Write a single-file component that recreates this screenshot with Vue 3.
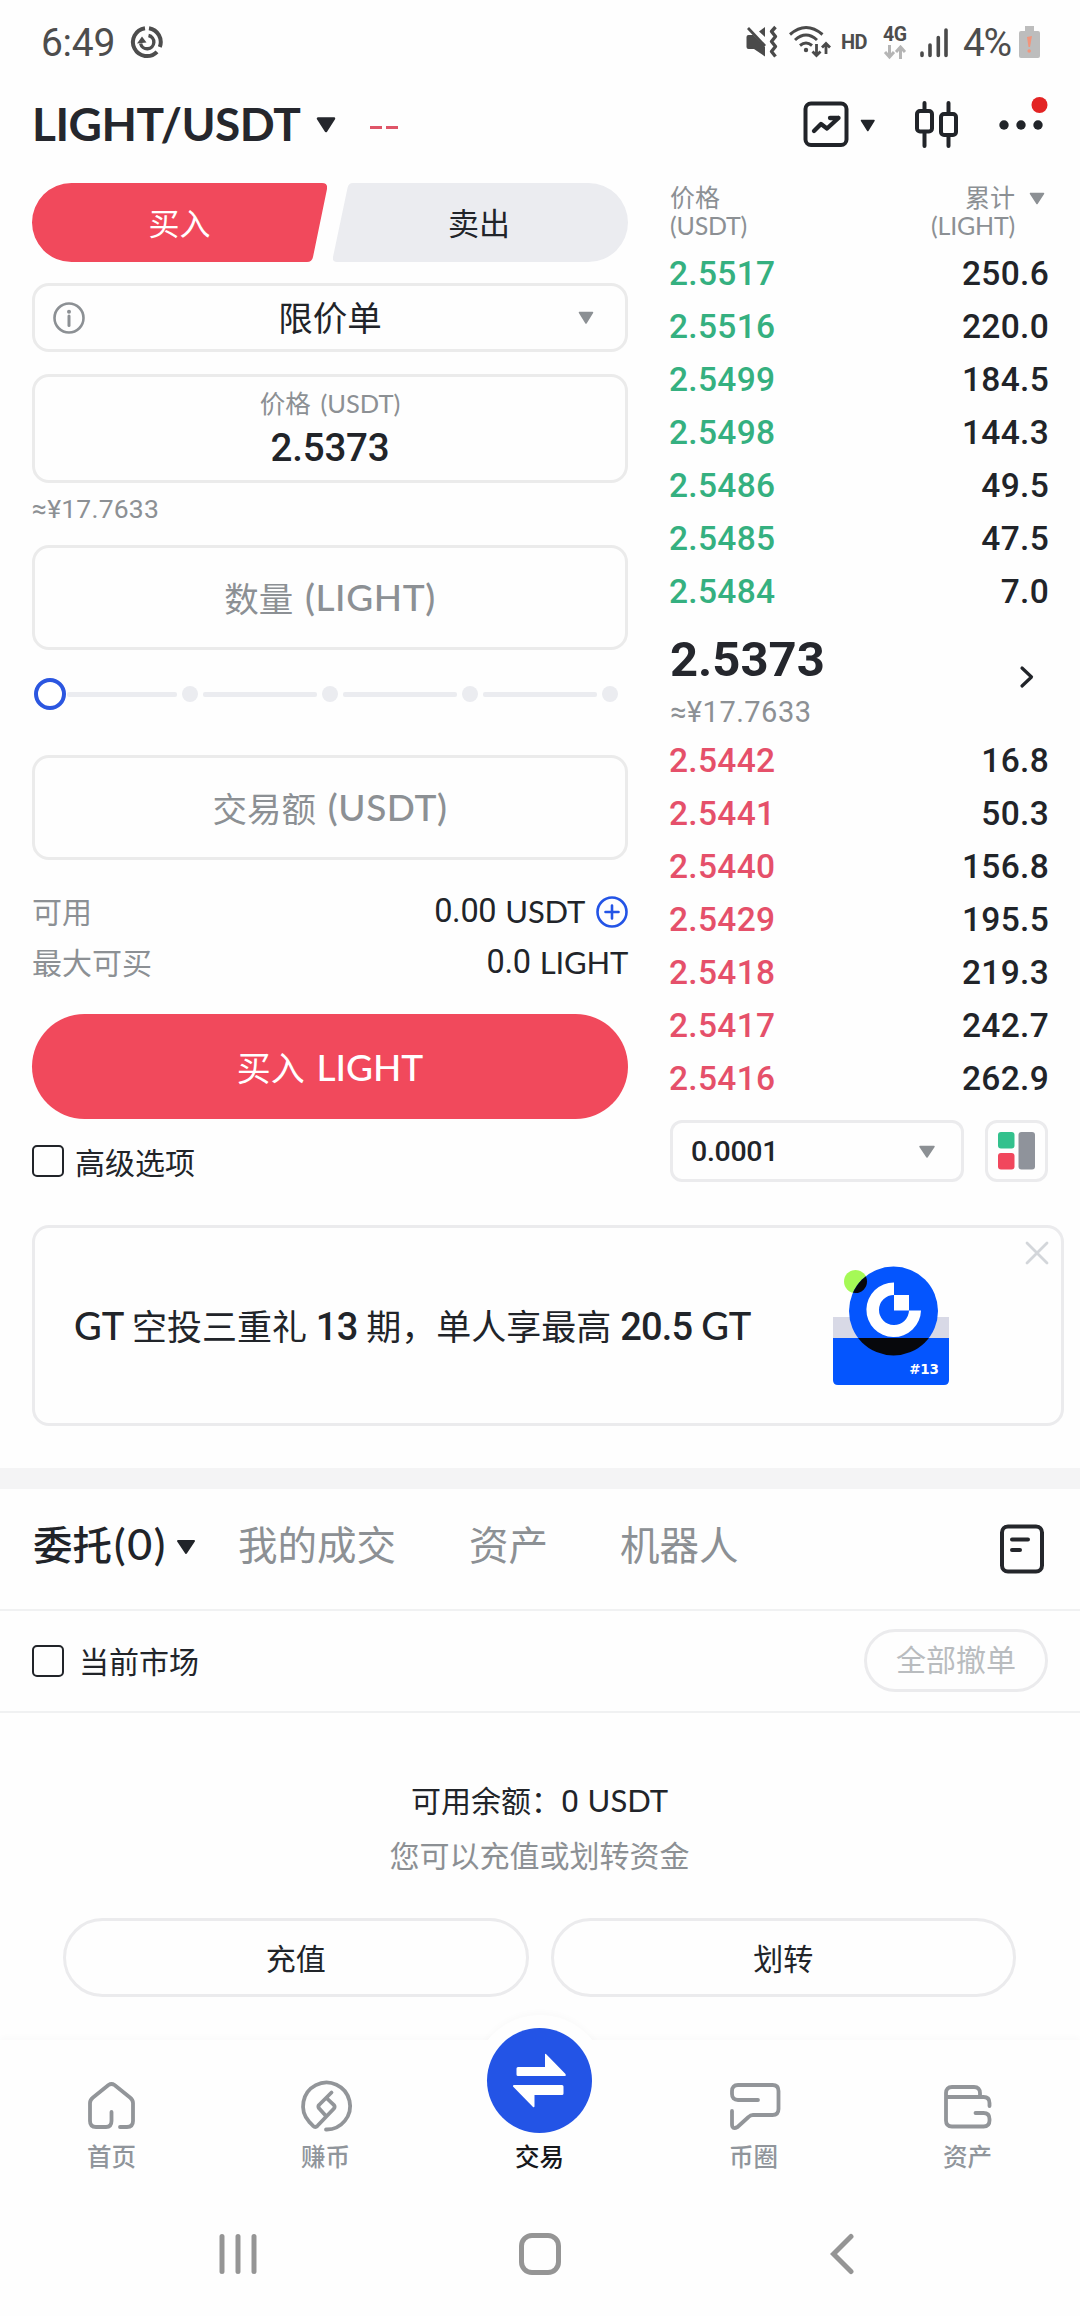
<script setup>
const bids = [
  ['2.5517', '250.6'],
  ['2.5516', '220.0'],
  ['2.5499', '184.5'],
  ['2.5498', '144.3'],
  ['2.5486', '49.5'],
  ['2.5485', '47.5'],
  ['2.5484', '7.0'],
]
const asks = [
  ['2.5442', '16.8'],
  ['2.5441', '50.3'],
  ['2.5440', '156.8'],
  ['2.5429', '195.5'],
  ['2.5418', '219.3'],
  ['2.5417', '242.7'],
  ['2.5416', '262.9'],
]
const home = 'M33 46h7q6 0 6-6V22q0-3-3-5.5L27.5 4q-3-2-6 0L6 16.5Q3 19 3 22V40q0 6 6 6h10q5.5 0 5.5-6V31'
const earn = 'M25 48.5A23.5 23.5 0 1 0 8 40.6L12 44.8Q14.3 47 16.5 44.8L33 27.5Q34.2 25.8 33 24.2L26 17.5M30.5 11.5L18 24Q16.8 25.6 18 27.3L24.5 34.5'
const chat = 'M29 19H9q-6 0-6-6V10q0-6 6-6H43.5q6 0 6 6V28q0 6-6 6H24q-2.5 0-4.5 2L8.5 46Q3 49 3 43V30'
const wallet = 'M46.5 25V22q0-6-6-6H3M37 16V12q0-6-6-6H9q-6 0-6 6V39.5q0 6 6 6H40.5q6 0 6-6V38q0-6-6-6H32.5'
const tabs = [
  { label: '首页', icon: home },
  { label: '赚币', icon: earn },
  { label: '交易', active: true },
  { label: '币圈', icon: chat },
  { label: '资产', icon: wallet },
]
</script>

<template>
  <div class="screen">
    <div class="status">
      <span class="clock">6:49</span>
      <svg class="sync" width="34" height="34" viewBox="0 0 34 34" fill="none" stroke="#4d4d4d">
        <path d="M19 3.2A14 14 0 0 1 29.8 22M27 26.8A14 14 0 1 1 15 3.2" stroke-width="4" />
        <path d="M18.5 10.5A6.7 6.7 0 1 1 10.6 18.5" stroke-width="3.4" />
        <path d="M7 18.5L12 11.5L16.5 17.5Z" fill="#4d4d4d" stroke="none" />
      </svg>
      <span class="grow"></span>
      <svg class="mute" width="34" height="34" viewBox="0 0 34 34" fill="none" stroke="#4a4a4a">
        <path d="M1.5 12q0-2 2-2H8L20 22V31.5L9 24H3.5q-2 0-2-2Z" fill="#4a4a4a" stroke="none" />
        <path d="M14 6.5L20 2V12Z" fill="#4a4a4a" stroke="none" />
        <path d="M3 3L20 21" stroke-width="2.8" />
        <path d="M30.5 2L26.5 6.5L30.5 11.5L26.5 16.5L30.5 21.5L26.5 26.5L30.5 31.5" stroke-width="3.4" stroke-linejoin="round" />
      </svg>
      <svg class="wifi" width="44" height="34" viewBox="0 0 44 34" fill="none" stroke="#4a4a4a" stroke-width="3">
        <path d="M2 9.5Q18-4.5 34.5 9.5M7 15Q18 5 29 15M12 20.5Q18 15.5 24 20.5" />
        <circle cx="18" cy="25" r="2.2" fill="#4a4a4a" stroke="none" />
        <path d="M28.5 19V30M24.5 26.5L28.5 30.5L32.5 26.5M38 29V19M34 22.5L38 18.5L42 22.5" stroke-width="2.8" />
      </svg>
      <span class="hd">HD</span>
      <span class="net">
        <span class="g4">4G</span>
        <svg width="24" height="15" viewBox="0 0 24 15" fill="none" stroke="#b5b5b5" stroke-width="3">
          <path d="M6.5 0V11M2 7L6.5 12L11 7M17.5 14V3M13 7L17.5 2L22 7" />
        </svg>
      </span>
      <svg class="bars" width="28" height="30" viewBox="0 0 28 30" stroke="#4a4a4a" stroke-width="3.6" stroke-linecap="round">
        <path d="M2 25V27.5M10 17V27.5M18.3 9.5V27.5M26 2V27.5" />
      </svg>
      <span class="pct">4%</span>
      <svg class="battery" width="21" height="34" viewBox="0 0 21 34">
        <path d="M6 1H15V6H19q2 0 2 2V31q0 2-2 2H2q-2 0-2-2V8q0-2 2-2H6Z" fill="#bdbdbd" />
        <path d="M8 12L13 11L11 22H9.5Z" fill="#f2957c" />
        <circle cx="10.2" cy="26" r="1.8" fill="#f2957c" />
      </svg>
    </div>

    <header class="head">
      <span class="pair">LIGHT/USDT</span>
      <svg class="pair-arrow" width="20" height="16" viewBox="0 0 20 16"><path d="M2 1.5H18L10 14Z" fill="#25272d" stroke="#25272d" stroke-width="2.5" stroke-linejoin="round" /></svg>
      <span class="change"><i></i><i></i></span>
      <span class="grow"></span>
      <svg width="46" height="48" viewBox="0 0 46 48" fill="none" stroke="#212429" stroke-width="4" stroke-linecap="round" stroke-linejoin="round">
        <rect x="2.5" y="3.5" width="41" height="41.5" rx="5.5" />
        <path d="M11 31L18 24L24 28.5L35.5 18M27 18H35.5" stroke-width="4.3" />
      </svg>
      <svg class="chart-arrow" width="16" height="13" viewBox="0 0 16 13"><path d="M1.5 1.5H14L7.8 11.5Z" fill="#212429" stroke="#212429" stroke-width="1.5" stroke-linejoin="round" /></svg>
      <svg class="candles" width="46" height="48" viewBox="0 0 46 48" fill="none" stroke="#212429" stroke-width="4">
        <rect x="3" y="11" width="15" height="20.5" rx="3" />
        <rect x="27" y="14" width="15" height="21" rx="3" />
        <path d="M10.5 3V10M10.5 32V46M34.5 3V13M34.5 36V46" stroke-linecap="round" />
      </svg>
      <svg class="more" width="48" height="48" viewBox="0 0 48 48">
        <g fill="#212429"><circle cx="8" cy="25" r="4.7" /><circle cx="25" cy="25" r="4.7" /><circle cx="42" cy="25" r="4.7" /></g>
        <circle cx="43.5" cy="5" r="8" fill="#e32424" />
      </svg>
    </header>

    <main class="trade">
      <section class="form">
        <div class="sides">
          <div class="side buy">买入</div>
          <div class="side sell">卖出</div>
        </div>
        <div class="box type">
          <svg width="32" height="32" viewBox="0 0 32 32" fill="none" stroke="#8c9094">
            <circle cx="16" cy="16" r="14.5" stroke-width="2.6" />
            <path d="M16 14V23.5" stroke-width="3" stroke-linecap="round" /><circle cx="16" cy="9.7" r="2" fill="#8c9094" stroke="none" />
          </svg>
          <span>限价单</span>
          <svg class="type-arrow" width="16" height="14" viewBox="0 0 16 14"><path d="M1.5 1.5H14.5L8 12Z" fill="#8c9094" stroke="#8c9094" stroke-linejoin="round" stroke-width="1.5" /></svg>
        </div>
        <div class="box price">
          <div class="price-label">价格 <span class="lat">(USDT)</span></div>
          <div class="price-value num">2.5373</div>
        </div>
        <div class="approx num">≈¥17.7633</div>
        <div class="box field">数量&nbsp;<span class="lat">(LIGHT)</span></div>
        <div class="slider">
          <i class="thumb"></i>
          <template v-for="n in 4" :key="n"><i class="seg"></i><i class="stop"></i></template>
        </div>
        <div class="box field">交易额&nbsp;<span class="lat">(USDT)</span></div>
        <div class="balances">
          <div class="bal"><span>可用</span><b><span class="num">0.00</span> <span class="lat">USDT</span>
            <svg width="32" height="32" viewBox="0 0 32 32" fill="none" stroke="#2354e6" stroke-width="2.6" stroke-linecap="round"><circle cx="16" cy="16" r="14.5" /><path d="M16 9.5V22.5M9.5 16H22.5" /></svg></b></div>
          <div class="bal"><span>最大可买</span><b><span class="num">0.0</span> <span class="lat">LIGHT</span></b></div>
        </div>
        <div class="submit">买入&nbsp;<span class="lat">LIGHT</span></div>
        <div class="advanced"><i class="check"></i><span>高级选项</span></div>
      </section>

      <section class="book">
        <div class="book-head">
          <div>价格<br /><span class="lat">(USDT)</span></div>
          <div class="total">
            <div>累计<br /><span class="lat">(LIGHT)</span></div>
            <svg width="16" height="13" viewBox="0 0 16 13"><path d="M1.5 1.5H14.5L8 11.5Z" fill="#8c9094" stroke="#8c9094" stroke-linejoin="round" stroke-width="1.5" /></svg>
          </div>
        </div>
        <div v-for="row in bids" :key="row[0]" class="row up"><span>{{ row[0] }}</span><b>{{ row[1] }}</b></div>
        <div class="last">
          <div>
            <div class="last-price">2.5373</div>
            <div class="last-fiat num">≈¥17.7633</div>
          </div>
          <svg width="16" height="24" viewBox="0 0 16 24" fill="none" stroke="#212429" stroke-width="3.2" stroke-linecap="round" stroke-linejoin="round"><path d="M3 3L12.5 12L3 21" /></svg>
        </div>
        <div v-for="row in asks" :key="row[0]" class="row down"><span>{{ row[0] }}</span><b>{{ row[1] }}</b></div>
        <div class="depth">
          <div class="step"><span class="num">0.0001</span>
            <svg width="18" height="14" viewBox="0 0 18 14"><path d="M2 1.5H16L9 12Z" fill="#8c9094" stroke="#8c9094" stroke-linejoin="round" stroke-width="1.5" /></svg>
          </div>
          <div class="view">
            <svg width="38" height="38" viewBox="0 0 38 38"><rect width="16.5" height="16.5" rx="3" fill="#33c18d" /><rect y="21" width="16.5" height="16.5" rx="3" fill="#f1475d" /><rect x="20.5" width="16.5" height="37.5" rx="3" fill="#8f939b" /></svg>
          </div>
        </div>
      </section>
    </main>

    <section class="banner">
      <div class="promo"><span class="lat">GT</span> 空投三重礼 <span class="num">13</span> 期，单人享最高 <span class="num">20.5</span> <span class="lat">GT</span></div>
      <svg class="art" width="118" height="122" viewBox="0 0 118 122">
        <defs>
          <clipPath id="coin"><circle cx="61.5" cy="46" r="44.5" /></clipPath>
        </defs>
        <rect x="1" y="52" width="116" height="30" fill="#d8d9e6" />
        <path d="M1 73H117V115q0 5-5 5H6q-5 0-5-5Z" fill="#0455fe" />
        <circle cx="23.5" cy="16.5" r="11.5" fill="#a5f956" />
        <circle cx="61.5" cy="46" r="44.5" fill="#0455fe" />
        <g clip-path="url(#coin)">
          <rect y="73" width="118" height="30" fill="#07080c" />
          <circle cx="23.5" cy="16.5" r="11.5" fill="#07080c" />
        </g>
        <path d="M62 17.500V30A15 15 0 1 0 77 45.500H89A27.300 27.300 0 1 1 62 17.500Z" fill="#fff" />
        <rect x="62" y="30" width="15" height="15.5" fill="#fff" />
        <text x="106.5" y="109" text-anchor="end" class="issue">#13</text>
      </svg>
      <svg class="close" width="24" height="24" viewBox="0 0 24 24" stroke="#d3d6da" stroke-width="2.8" stroke-linecap="round"><path d="M2 2L22 22M22 2L2 22" /></svg>
    </section>

    <section class="orders">
      <div class="order-tabs">
        <span class="on">委托<span class="lat">(0)</span></span>
        <svg class="on-arrow" width="20" height="16" viewBox="0 0 20 16"><path d="M2 2H18L10 14Z" fill="#212429" stroke="#212429" stroke-width="2" stroke-linejoin="round" /></svg>
        <span class="t2">我的成交</span><span class="t3">资产</span><span class="t4">机器人</span>
        <span class="grow"></span>
        <svg class="history" width="44" height="50" viewBox="0 0 44 50" fill="none" stroke="#24262b" stroke-width="4" stroke-linecap="round"><rect x="2" y="2.5" width="40" height="45" rx="6" /><path d="M12 15.5H28M12 26H20" /></svg>
      </div>
      <div class="market"><i class="check"></i><span>当前市场</span><div class="cancel">全部撤单</div></div>
      <div class="empty">
        <div>可用余额：<span class="num">0</span> <span class="lat">USDT</span></div>
        <div class="hint">您可以充值或划转资金</div>
        <div class="actions"><div>充值</div><div>划转</div></div>
      </div>
    </section>

    <nav class="nav">
      <div class="bump"></div>
      <div v-for="t in tabs" :key="t.label" class="tab" :class="{ active: t.active }">
        <div v-if="t.active" class="swap">
          <svg width="105" height="105" viewBox="0 0 105 105" fill="#fff">
            <path d="M31 39H58V26.5Q58 25 59.5 26.5L78.5 46Q79.5 48 78 48H31Q29.5 48 29.5 46.5V40.5Q29.5 39 31 39Z" />
            <path d="M27 57H75q1.500 0 1.500 1.500v7q0 1.500-1.500 1.500H47.500V78q0 2-1.500 1L26 58.500q-.500-1.500 1-1.500Z" />
          </svg>
        </div>
        <svg v-else width="50" height="50" viewBox="0 0 50 50" overflow="visible" fill="none" stroke="#929599" stroke-width="3.8" stroke-linecap="round" stroke-linejoin="round"><path :d="t.icon" /></svg>
        <span>{{ t.label }}</span>
      </div>
    </nav>

    <div class="system">
      <div><svg width="40" height="42" viewBox="0 0 40 42" stroke="#959595" stroke-width="5" stroke-linecap="round"><path d="M4 3.5V38.5M20 3.5V38.5M36 3.5V38.5" /></svg></div>
      <div><svg width="42" height="42" viewBox="0 0 42 42" fill="none" stroke="#959595" stroke-width="5"><rect x="2.5" y="2.5" width="37" height="37" rx="10.5" /></svg></div>
      <div><svg width="24" height="42" viewBox="0 0 24 42" fill="none" stroke="#959595" stroke-width="5" stroke-linecap="round"><path d="M21 3.5L3.5 21L21 38.5" /></svg></div>
    </div>
  </div>
</template>

<style>
body {
  margin: 0;
  background: #fefefe;
}
</style>

<style scoped>
.screen {
  width: 1080px;
  height: 2316px;
  overflow: hidden;
  display: flex;
  flex-direction: column;
  background: #fefefe;
  color: #212429;
  font-family: 'Noto Sans CJK SC', sans-serif;
  white-space: nowrap;
}
.screen * { box-sizing: border-box; }
svg { display: block; flex: none; }
i { display: block; flex: none; }
b { font-weight: inherit; }
.lat { font-family: Lato, sans-serif; }
.num { font-family: Roboto, sans-serif; }
.grow { flex: 1; }

.status {
  height: 83px;
  padding: 0 40px 0 41px;
  display: flex;
  align-items: center;
  font-family: Roboto, sans-serif;
  color: #4d4d4d;
}
.clock { font-size: 39px; letter-spacing: -0.3px; margin-top: 3px; width: 89px; }
.mute { margin-right: 9px; }
.wifi { margin-right: 9px; }
.hd { font-size: 20px; font-weight: 700; width: 42px; letter-spacing: -0.5px; }
.net { width: 37px; margin-top: 3px; }
.g4 { display: block; font-size: 19.5px; font-weight: 700; line-height: 18px; letter-spacing: -0.5px; }
.net svg { margin-top: 1px; }
.bars { margin-right: 15px; margin-top: 2px; }
.pct { font-size: 39px; letter-spacing: -1.5px; margin-top: 3px; width: 56px; }

.head {
  height: 82px;
  padding: 0 36px 0 32px;
  display: flex;
  align-items: center;
}
.pair { font: 700 46px/60px Lato, sans-serif; color: #25272d; letter-spacing: -0.5px; width: 284px; margin-top: -1px; }
.pair-arrow { margin-top: 2px; }
.change { display: flex; gap: 4px; margin: 7px 0 0 34px; }
.change i { width: 12px; height: 3px; background: #df5568; }
.chart-arrow { margin: 2px 0 0 11px; }
.candles { margin-left: 38px; }
.more { margin-left: 36px; overflow: visible; }

.trade {
  display: flex;
  justify-content: space-between;
  padding: 18px 32px 0 32px;
  height: 1060px;
}
.form { width: 596px; }
.sides { display: flex; gap: 6px; height: 79px; }
.side {
  width: 295px;
  font-size: 31px;
  line-height: 77px;
  text-align: center;
}
.buy { background: #f1495c; color: #fff; clip-path: path('M39.5 0H290Q296 0 295 6L281 74Q280 79 275 79H39.5A39.5 39.5 0 0 1 39.5 0Z'); }
.sell { background: #ebecf0; padding-right: 3px; clip-path: path('M20 0H255.5A39.5 39.5 0 0 1 255.5 79H4Q-1 79 0 74L14.5 5Q15.5 0 20 0Z'); }
.box { border: 3px solid #ebebeb; border-radius: 17px; }
.type {
  margin-top: 21px;
  height: 69px;
  padding: 0 31px 0 18px;
  display: flex;
  align-items: center;
  justify-content: space-between;
  font-size: 34.5px;
}
.type span { margin: -4px 3px 0 0; }
.price { margin-top: 22px; height: 109px; text-align: center; padding-top: 8px; }
.price-label { font-size: 25.5px; line-height: 34px; color: #8c9094; }
.price-label .lat { margin-left: 4px; }
.price-value { font-size: 38.5px; font-weight: 500; line-height: 56px; letter-spacing: -0.2px; }
.approx { height: 62px; line-height: 52px; font-size: 26.5px; letter-spacing: 0.2px; color: #8c9094; }
.field {
  height: 105px;
  display: flex;
  align-items: center;
  justify-content: center;
  padding-bottom: 2px;
  font-size: 34.5px;
  color: #8c9094;
}
.field .lat { font-size: 37px; font-weight: 500; letter-spacing: 0.6px; margin-left: 4px; }
.slider { height: 88px; margin-bottom: 17px; padding-left: 2px; display: flex; align-items: center; }
.thumb { width: 32px; height: 32px; border: 4px solid #2b56e0; border-radius: 50%; background: #fff; }
.seg { width: 114px; height: 5px; border-radius: 2px; background: #ebecf0; margin: 0 5px; }
.thumb + .seg { width: 110px; margin-left: 1px; }
.stop { width: 16px; height: 16px; border-radius: 50%; background: #ebecf0; }
.balances { margin-top: 26px; }
.bal { height: 51px; display: flex; justify-content: space-between; align-items: center; font-size: 30px; color: #8c9094; }
.bal > span { margin-top: -4px; }
.bal b { display: flex; align-items: center; font-size: 31px; color: #212429; line-height: 51px; }
.bal .num { margin-right: 9px; font-size: 32.5px; letter-spacing: -0.3px; }
.bal .lat { letter-spacing: -0.2px; }
.bal svg { margin-left: 11px; }
.submit {
  margin-top: 26px;
  height: 105px;
  border-radius: 52.5px;
  background: #f1495c;
  color: #fff;
  display: flex;
  align-items: center;
  justify-content: center;
  font-size: 34px;
}
.submit .lat { font-size: 37px; font-weight: 500; margin-left: 4px; }
.check { width: 32px; height: 32px; border: 2.5px solid #212429; border-radius: 5px; }
.advanced { margin-top: 26px; height: 32px; display: flex; align-items: center; gap: 11px; font-size: 30px; }
.advanced span { margin-top: -1px; }

.book { width: 378px; margin-left: auto; }
.book-head { height: 64px; padding: 0 3px 0 0; display: flex; justify-content: space-between; font-size: 25px; line-height: 28px; color: #8c9094; }
.book-head > div > div, .book-head > div:first-child { margin-top: -1px; }
.book-head .lat { letter-spacing: -0.2px; }
.total { display: flex; text-align: right; gap: 14px; }
.total svg { margin-top: 9px; }
.row {
  height: 53px;
  display: flex;
  justify-content: space-between;
  align-items: center;
  font: 500 33.5px/55px Roboto, sans-serif;
  letter-spacing: 0.3px;
}
.row span { margin-left: -1px; }
.row b { margin-right: -1px; }
.up span { color: #35b080; }
.down span { color: #e5506a; }
.last { height: 116px; display: flex; justify-content: space-between; align-items: center; padding-right: 13px; }
.last > div { padding-top: 9px; }
.last svg { margin-top: 2px; }
.last-price { font: 700 49px/62px Roboto, sans-serif; color: #25272d; }
.last-fiat { font-size: 29px; line-height: 42px; letter-spacing: 0.5px; color: #8c9094; }
.depth { margin-top: 15px; display: flex; justify-content: space-between; }
.step { width: 294px; height: 62px; border: 3px solid #ebebed; border-radius: 12px; display: flex; align-items: center; justify-content: space-between; padding: 1px 25px 0 18px; font-size: 28.5px; font-weight: 500; letter-spacing: -0.3px; }
.view { width: 63px; height: 62px; border: 3px solid #ebebed; border-radius: 12px; display: flex; align-items: center; justify-content: center; }

.banner {
  position: relative;
  flex: none;
  width: 1032px;
  height: 201px;
  margin-left: 32px;
  border: 3px solid #ebebed;
  border-radius: 17px;
  display: flex;
  align-items: center;
}
.promo { margin-left: 39px; width: 758px; font-size: 35px; line-height: 60px; }
.promo .lat { font-size: 38px; font-weight: 500; }
.promo .num { font-size: 38px; font-weight: 500; letter-spacing: -0.8px; margin: 0 1px; }
.issue { font: 700 13.5px 'DejaVu Sans', sans-serif; fill: #fff; letter-spacing: -0.3px; }
.close { position: absolute; right: 12px; top: 13px; }

.orders { flex: none; margin-top: 42px; border-top: 21px solid #f4f4f5; height: 572px; }
.order-tabs { height: 122px; border-bottom: 2px solid #f0f1f2; padding: 0 36px 0 33px; display: flex; align-items: center; font-size: 39.5px; color: #8c9094; }
.order-tabs > span { margin-top: -13px; }
.on { color: #212429; width: 143px; font-weight: 500; }
.on .lat { font-size: 43px; letter-spacing: 1.6px; margin-left: 2px; }
.on-arrow { margin-top: -4px; }
.t2 { margin-left: 42px; width: 231px; }
.t3 { width: 151px; }
.market { height: 102px; border-bottom: 2px solid #f0f1f2; padding: 0 32px; display: flex; align-items: center; font-size: 30px; }
.market span { margin: -3px 0 0 15px; flex: 1; }
.cancel { width: 184px; height: 63px; border: 3px solid #ebebed; border-radius: 32px; text-align: center; line-height: 53px; color: #b9bcbf; margin-top: -1px; }
.empty { padding: 60px 64px 0 63px; text-align: center; font-size: 30px; line-height: 53px; }
.empty .lat { font-size: 31px; margin-left: 2px; }
.empty .num { font-size: 32px; }
.hint { color: #8c9094; }
.actions { margin-top: 37px; display: flex; gap: 22px; }
.actions div { flex: 1; height: 79px; line-height: 72px; border: 3px solid #ebebed; border-radius: 40px; }

.nav { position: relative; flex: none; height: 145px; padding: 0 5px 0 4.5px; display: flex; background: #fefefe; box-shadow: 0 -3px 6px rgba(30, 30, 40, 0.02); }
.bump { position: absolute; left: 473px; top: -25px; width: 134px; height: 134px; border-radius: 50%; box-shadow: 0 -3px 6px rgba(30, 30, 40, 0.02); clip-path: inset(-12px -12px 109px -12px); background: #fefefe; }
.tab { width: 214px; height: 145px; display: flex; flex-direction: column; align-items: center; justify-content: flex-end; padding-bottom: 11px; font-size: 24.5px; font-weight: 500; line-height: 36px; color: #90959b; }
.tab svg { margin-bottom: 7px; }
.tab.active { color: #16181c; position: relative; }
.swap { height: 105px; width: 105px; border-radius: 50%; background: #2354e6; margin-bottom: 5px; flex: none; }

.system { height: 131px; padding: 7px 208px 0; display: flex; align-items: center; justify-content: space-between; }
.system div { width: 60px; display: flex; justify-content: center; }
</style>
